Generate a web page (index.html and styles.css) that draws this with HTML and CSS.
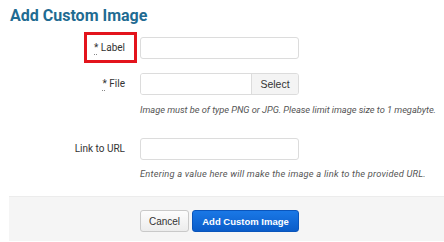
FILE: index.html
```html
<!DOCTYPE html>
<html lang="en">
<head>
  <meta charset="UTF-8" />
  <title>Add Custom Image</title>
  <link rel="stylesheet" href="styles.css">
</head>
<body>
  <div class="dialog">
    <h1 class="dialog-title">Add Custom Image</h1>

    <!-- Form rows -->
    <div class="form-row row-label">
      <label class="field-label"><span class="highlight"><abbr class="req" title="required">*</abbr> Label</span></label>
      <div class="field">
        <input type="text" class="text-input">
      </div>
    </div>

    <div class="form-row row-file">
      <label class="field-label"><abbr class="req" title="required">*</abbr> File</label>
      <div class="field">
        <div class="file-picker">
          <div class="file-name"></div>
          <button class="select-btn">Select</button>
        </div>
      </div>
    </div>
    <p class="help-text help-file">Image must be of type PNG or JPG. Please limit image size to 1 megabyte.</p>

    <div class="form-row row-link">
      <label class="field-label">Link to URL</label>
      <div class="field">
        <input type="text" class="text-input">
      </div>
    </div>
    <p class="help-text help-link">Entering a value here will make the image a link to the provided URL.</p>

    <!-- Footer -->
    <div class="dialog-footer">
      <button class="btn btn-cancel">Cancel</button>
      <button class="btn btn-primary">Add Custom Image</button>
    </div>
  </div>
</body>
</html>
```

FILE: styles.css
```css
/*
  --------------------------------------------
  BASIC RESETS
  --------------------------------------------
*/
* {
  margin: 0;
  padding: 0;
  box-sizing: border-box;
}

body {
  font-family: Roboto, "Liberation Sans", sans-serif;
  background-color: #fff;
  color: #333;
  width: 444px;
  height: 242px;
  overflow: hidden;
}

.dialog {
  padding-left: 9px;
}

.dialog-title {
  font-size: 16px;
  line-height: 22px;
  font-weight: 700;
  color: #1f6b92;
  padding-top: 5px;
  padding-left: 1px;
  margin-bottom: 10px;
}

/*
  --------------------------------------------
  FORM ROWS
  --------------------------------------------
*/
.form-row {
  display: flex;
  align-items: center;
}

.field-label {
  width: 116px;
  text-align: right;
  font-size: 10px;
  line-height: 14px;
  color: #333;
}

.field {
  margin-left: 15px;
  width: 159px;
}

.req {
  text-decoration: underline dotted #888;
  text-underline-offset: 3px;
}

/* Red marker around the label (annotation) */
.highlight {
  display: inline-block;
  padding: 6px 9px 5px 7px;
  margin: -6px -9px -5px -7px;
  outline: 3px solid #e3141c;
}

.text-input {
  display: block;
  width: 159px;
  height: 22px;
  border: 1px solid #dcdcdc;
  border-radius: 3px;
  background-color: #fff;
  outline: none;
}

.row-file {
  margin-top: 14px;
}

.file-picker {
  display: flex;
  height: 22px;
  border: 1px solid #dcdcdc;
  border-radius: 3px;
  overflow: hidden;
}

.file-name {
  flex: 1;
  background-color: #fff;
}

.select-btn {
  width: 47px;
  border: none;
  border-left: 1px solid #dcdcdc;
  background-color: #f4f4f4;
  font-family: "Liberation Sans", Arial, sans-serif;
  font-size: 10.5px;
  color: #333;
}

.help-text {
  margin-left: 131px;
  font-size: 9.3px;
  line-height: 12px;
  font-style: italic;
  color: #555;
  white-space: nowrap;
}

.help-file {
  margin-top: 9px;
  letter-spacing: -0.04px;
}

.help-link {
  margin-top: 8px;
  letter-spacing: 0.2px;
}

.row-link {
  margin-top: 22px;
}

/*
  --------------------------------------------
  FOOTER
  --------------------------------------------
*/
.dialog-footer {
  margin-top: 16px;
  height: 45px;
  background-color: #f5f5f5;
  border-top: 1px solid #ececec;
  padding: 13px 0 0 131px;
  display: flex;
  gap: 3px;
  align-items: flex-start;
}

.btn {
  height: 22px;
  padding: 0;
  border-radius: 3px;
  font-family: "Liberation Sans", Arial, sans-serif;
  white-space: nowrap;
  cursor: pointer;
}

.btn-cancel {
  width: 49px;
  font-size: 10px;
  background: linear-gradient(#fdfdfd, #ececec);
  border: 1px solid #c9c9c9;
  color: #333;
}

.btn-primary {
  width: 107px;
  font-size: 9.5px;
  background: linear-gradient(#1a78e6, #0a5cc9);
  border: 1px solid #0a55bb;
  color: #fff;
  font-weight: 700;
}
```
